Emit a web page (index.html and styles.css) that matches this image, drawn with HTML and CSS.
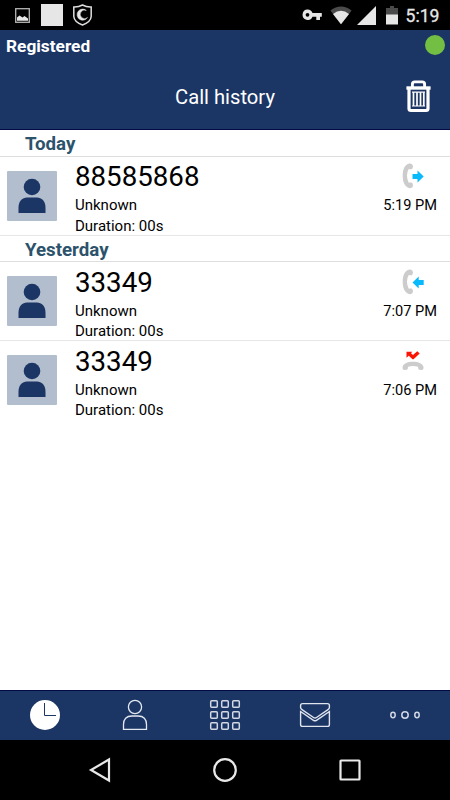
FILE: index.html
```html
<!DOCTYPE html>
<html lang="en">
<head>
<meta charset="utf-8">
<title>Call history</title>
<link rel="stylesheet" href="styles.css">
</head>
<body>
<svg class="defs" width="0" height="0">
  <symbol id="avatar" viewBox="0 0 50 50">
    <circle cx="25" cy="16" r="8.300"/>
    <path d="M11.500 42V36.500C11.500 30 15.500 26.500 20 26.500H30C34.500 26.500 38.500 30 38.500 36.500V42Z"/>
  </symbol>
  <symbol id="handset" viewBox="0 0 13 26">
    <path d="M8.500 .6C3.500 1.500 1.700 7 1.700 12.800S3.500 24.200 8.500 25.200Q11.600 25.300 12 22.500Q12 20 10.500 19.600C9 19.200 8.500 19.600 7.700 19.700Q6 16.800 6 12.800T7.700 6C8.500 6.200 9 6.600 10.500 6.200Q12 5.600 12 3.500Q11.600 .5 8.500 .6Z"/>
  </symbol>
</svg>
<div class="screen">
  <div class="status">
    <div class="status-left">
      <svg width="15" height="15" viewBox="0 0 15 15"><rect x=".7" y=".7" width="13.600" height="13.600" fill="none" stroke="#b5b5b5" stroke-width="1.300"/><path d="M2 12.700V9.500L4.500 7.500 7.500 9.500 9.500 8 13 10.500V12.700Z" fill="#e6e6e6"/></svg>
      <span class="square"></span>
      <svg width="19" height="22" viewBox="0 0 19 22"><path d="M9.500 1Q13.500 3.200 18.200 3V12.500Q17.800 18 9.500 21Q1.200 18 .8 12.500V3Q5.500 3.200 9.500 1Z" fill="none" stroke="#dedede" stroke-width="1.500"/><path d="M13.300 6.400A5.600 5.600 0 1 0 14.500 13.500A4.300 4.300 0 1 1 13.300 6.400Z" fill="#e6e6e6" stroke="#e6e6e6" stroke-width=".5"/></svg>
    </div>
    <div class="status-right">
      <svg width="20" height="12" viewBox="0 0 20 12"><path fill-rule="evenodd" fill="#e6e6e6" d="M5.500 .5A5.200 5.200 0 0 1 10.500 4H19.800V7.800H18V11H14.300V7.800H10.500A5.200 5.200 0 1 1 5.500 .5ZM5.500 3.900A1.900 1.900 0 1 0 5.500 7.700A1.900 1.900 0 0 0 5.500 3.900Z"/></svg>
      <svg width="22" height="19" viewBox="0 0 22 19"><path d="M.4 4.500Q11-3.600 21.600 4.500L11 18.300Z" fill="#4b4b4b"/><path d="M3 7.900Q11 1.800 19 7.900L11 18.300Z" fill="#e6e6e6"/></svg>
      <svg width="19" height="19" viewBox="0 0 19 19"><path d="M19 0V19H0Z" fill="#e6e6e6"/></svg>
      <svg width="12" height="19" viewBox="0 0 12 19"><path d="M4 0H8V2H12V9H0V2H4Z" fill="#4b4b4b"/><path d="M0 8.500H12V18.500H0Z" fill="#e6e6e6"/></svg>
      <span class="clock">5:19</span>
    </div>
  </div>

  <header class="header">
    <div class="account"><span>Registered</span><i class="online"></i></div>
    <div class="titlebar">
      <h1>Call history</h1>
      <svg class="trash" width="25" height="33" viewBox="0 0 25 33" fill="none" stroke="#fff"><path d="M6.400 7V4.200Q6.400 1.900 8.800 1.900H16.200Q18.600 1.900 18.600 4.200V7" stroke-width="2.900"/><path d="M.4 8H24.600" stroke-width="3.400"/><path d="M3 8V28.500Q3 30.500 5 30.500H20Q22 30.500 22 28.500V8" stroke-width="3.200"/><path d="M7.500 12.300V26M11 12.300V26M14.500 12.300V26M17.800 12.300V26" stroke-width="1.700"/><path d="M6 12.200H19M6 26H19" stroke-width="1.200"/></svg>
    </div>
  </header>

  <main class="list">
    <h2 class="day">Today</h2>
    <div class="call">
      <div class="avatar"><svg width="50" height="50"><use href="#avatar"/></svg></div>
      <div class="info"><div class="number">88585868</div><div>Unknown</div><div>Duration: 00s</div></div>
      <div class="when">
        <svg width="25" height="26" viewBox="0 0 25 26"><use href="#handset" width="13" height="26" fill="#ccc"/><path d="M11.500 11H16.500V7.500L22.700 13.500 16.500 19.500V16H11.500Z" fill="#08b9fc"/></svg>
        <span>5:19 PM</span>
      </div>
    </div>
    <h2 class="day">Yesterday</h2>
    <div class="call">
      <div class="avatar"><svg width="50" height="50"><use href="#avatar"/></svg></div>
      <div class="info"><div class="number">33349</div><div>Unknown</div><div>Duration: 00s</div></div>
      <div class="when">
        <svg width="25" height="26" viewBox="0 0 25 26"><use href="#handset" width="13" height="26" fill="#ccc"/><path d="M22.700 11H17.700V7.500L11.500 13.500 17.700 19.500V16H22.700Z" fill="#08b9fc"/></svg>
        <span>7:07 PM</span>
      </div>
    </div>
    <div class="call last">
      <div class="avatar"><svg width="50" height="50"><use href="#avatar"/></svg></div>
      <div class="info"><div class="number">33349</div><div>Unknown</div><div>Duration: 00s</div></div>
      <div class="when">
        <svg width="25" height="26" viewBox="0 0 25 26"><path d="M5.500 3.700H11.300L10 5.200 12 7.100 16.200 3.200 18.700 5.500 12.500 11.200H11.500L7.800 7.700 5.500 9.800Z" fill="#fb1505"/><path d="M1.500 19.500C1.800 15.500 6.500 13.700 12 13.700S22.200 15.500 22.600 19.500Q22.700 22 20.500 22Q17.500 22 17.300 20.800L17 18.800Q12 17 7 18.800L6.800 20.800Q6.500 22 3.500 22Q1.300 22 1.500 19.500Z" fill="#ccc"/></svg>
        <span>7:06 PM</span>
      </div>
    </div>
  </main>

  <nav class="tabs">
    <svg width="32" height="32" viewBox="0 0 32 32"><circle cx="16" cy="16" r="15" fill="#fff"/><path d="M15.500 4V16.500H27" fill="none" stroke="#1b3564"/></svg>
    <svg width="32" height="32" viewBox="0 0 32 32" fill="none" stroke="#e4e8f0" stroke-width="1.300"><circle cx="16" cy="8" r="6.600"/><path d="M4.500 30.400V25.500Q4.500 17 13 17H19Q27.500 17 27.500 25.500V30.400Z"/></svg>
    <svg width="32" height="32" viewBox="0 0 32 32" fill="none" stroke="#d3d9e4" stroke-width="1.500"><rect x="1.700" y="1.700" width="6.600" height="6.600" rx="1"/><rect x="12.700" y="1.700" width="6.600" height="6.600" rx="1"/><rect x="23.700" y="1.700" width="6.600" height="6.600" rx="1"/><rect x="1.700" y="12.700" width="6.600" height="6.600" rx="1"/><rect x="12.700" y="12.700" width="6.600" height="6.600" rx="1"/><rect x="23.700" y="12.700" width="6.600" height="6.600" rx="1"/><rect x="1.700" y="23.700" width="6.600" height="6.600" rx="1"/><rect x="12.700" y="23.700" width="6.600" height="6.600" rx="1"/><rect x="23.700" y="23.700" width="6.600" height="6.600" rx="1"/></svg>
    <svg width="32" height="32" viewBox="0 0 32 32" fill="none" stroke="#dfe4ed" stroke-width="1.400"><path d="M3.500 4.600H28.500Q30.400 4.600 30.400 6.500V8.500Q30.400 9.800 29 10.700L17.500 18.500Q16 19.500 14.500 18.500L3 10.700Q1.600 9.800 1.600 8.500V6.500Q1.600 4.600 3.500 4.600Z"/><path d="M1.600 12.500V25.500Q1.600 27.400 3.500 27.400H28.500Q30.400 27.400 30.400 25.500V12.500L17.500 21.300Q16 22.300 14.500 21.300Z"/></svg>
    <svg width="32" height="32" viewBox="0 0 32 32" fill="none" stroke="#d3d9e4" stroke-width="1.500"><ellipse cx="4" cy="16" rx="2.200" ry="2.700"/><circle cx="16" cy="16" r="3.200"/><ellipse cx="28" cy="16" rx="2.200" ry="2.700"/></svg>
  </nav>

  <div class="system">
    <svg width="26" height="26" viewBox="0 0 26 26"><path d="M22 2.500V23.500L4 13Z"/></svg>
    <svg width="26" height="26" viewBox="0 0 26 26"><circle cx="13" cy="13" r="10.800"/></svg>
    <svg width="26" height="26" viewBox="0 0 26 26"><rect x="3.500" y="3.500" width="19" height="19" rx=".5"/></svg>
  </div>
</div>
</body>
</html>
```

FILE: styles.css
```css
* { box-sizing: border-box; }
body { margin: 0; font-family: Roboto, sans-serif; background: #fff; color: #000; }
svg { display: block; flex: none; }
.defs { position: absolute; }
.screen { width: 450px; height: 800px; display: flex; flex-direction: column; overflow: hidden; }
.status { height: 30px; flex: none; background: #000; display: flex; justify-content: space-between; align-items: center; padding: 0 10.5px 0 15px; }
.status-left { display: flex; align-items: center; gap: 11px; }
.square { width: 22px; height: 22px; background: #e6e6e6; margin-right: -1px; }
.status-right { display: flex; align-items: center; }
.status-right svg:nth-child(1) { margin-right: 8px; }
.status-right svg:nth-child(2) { margin-right: 5px; }
.status-right svg:nth-child(3) { margin-right: 10px; }
.status-right svg:nth-child(4) { margin-right: 8px; }
.clock { font-size: 17.6px; line-height: 30px; color: #e6e6e6; font-weight: 400; -webkit-text-stroke: .3px #e6e6e6; padding-top: 1px; }
.header { height: 100px; flex: none; background: #1b3564; border-bottom: 1px solid #020b45; color: #fff; }
.account { height: 33px; display: flex; align-items: center; justify-content: space-between; padding: 0 5px 0 6px; font-size: 17.3px; font-weight: 700; }
.account span { padding-bottom: 1px; }
.online { width: 20px; height: 20px; border-radius: 50%; background: #73bf44; margin-top: -3px; }
.titlebar { height: 66px; display: grid; grid-template-columns: 1fr auto 1fr; align-items: center; padding-right: 19px; padding-left: 19px; }
.titlebar h1 { grid-column: 2; margin: 0; font-size: 20.2px; font-weight: 400; line-height: 30px; padding-top: 1px; }
.trash { justify-self: end; }
.list { flex: 1; padding-top: .2px; }
.day { margin: 0; height: 26.7px; padding-left: 25px; font-size: 18.7px; line-height: 28.4px; font-weight: 700; color: #2c536b; border-bottom: 1px solid #dedede; }
.call { height: 78.8px; display: flex; border-bottom: 1px solid #e6e6e6; padding: 0 0 0 6.5px; }
.call.last { border-bottom: 0; }
.avatar { width: 50px; height: 50px; margin-top: 14px; background: #b2bdce; fill: #1b3564; border-radius: 1px; }
.info { margin-left: 18.5px; padding-top: 2.6px; font-size: 15px; line-height: 20.500px; flex: 1; }
.number { font-size: 27.7px; line-height: 36px; }
.when { width: 100px; display: flex; flex-direction: column; align-items: flex-end; padding: 6.4px 13px 0 0; font-size: 14.6px; line-height: 20px; }
.when svg { margin: 0 11px 6px 0; }
.tabs { height: 50px; flex: none; background: #1b3564; border-top: 1px solid #020b45; display: grid; grid-template-columns: repeat(5, 1fr); place-items: center; padding-bottom: 1px; }
.system { height: 60px; flex: none; background: #000; display: flex; justify-content: center; align-items: center; gap: 99px; }
.system svg { fill: none; stroke: #e8e8e8; stroke-width: 2.200; }
```
